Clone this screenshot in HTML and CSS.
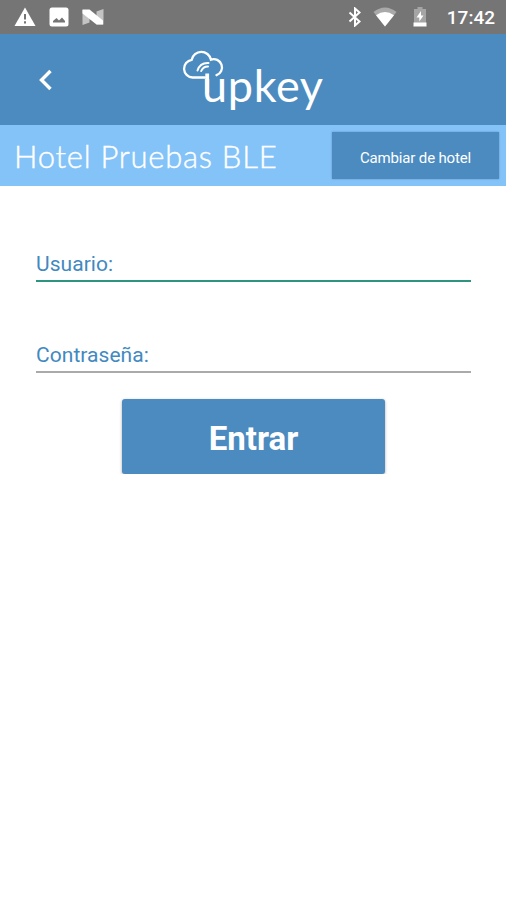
FILE: index.html
```
<!DOCTYPE html>
<html lang="es">
    <head>
        <meta charset="utf-8">
        <title>Upkey</title>
        <link rel="stylesheet" href="styles.css">
    </head>
    <body>
        <div class="status-bar">
            <div class="status-left">
                <svg width="22" height="20" viewBox="0 0 22 20">
                    <path d="M11 0.5 L21.5 19 H0.5 Z" fill="#fff"/>
                    <path d="M11 7 V12.5 M11 14.3 V16.5" stroke="#757575" stroke-width="2"/>
                </svg>
                <svg width="20" height="20" viewBox="0 0 20 20">
                    <rect x="0.5" y="0.5" width="19" height="19" rx="2.5" fill="#fff"/>
                    <path d="M4 15.5 V14 L7.5 11 L10 13.5 L13 10.5 L16 14 V15.5 Z" fill="#757575"/>
                </svg>
                <svg class="nougat" width="22" height="18" viewBox="0 0 22 18">
                    <path d="M0.5 2 H7.5 V14.5 L0.5 17 Z" fill="#c4c4c4"/>
                    <path d="M14.5 3.5 L21.5 1 V16.5 H14.5 Z" fill="#c4c4c4"/>
                    <path d="M0.5 1.5 H7.5 L21 12.5 V16.5 H14.5 L0.5 5.5 Z" fill="#fff"/>
                </svg>
            </div>
            <div class="status-right">
                <svg class="bluetooth" width="14" height="20" viewBox="0 0 14 20">
                    <path d="M1.5 5.5 L11.5 14.5 L7 18.5 V1.5 L11.5 5.5 L1.5 14.5" fill="none" stroke="#fff" stroke-width="2"/>
                </svg>
                <svg class="wifi" width="24" height="20" viewBox="0 0 24 20">
                    <path d="M0.5 5 Q12 -4 23.5 5 L12 19.5 Z" fill="#a9a9a9"/>
                    <path d="M3 8.3 Q12 1.8 21 8.3 L12 19.5 Z" fill="#fff"/>
                </svg>
                <svg class="battery" width="14" height="20" viewBox="0 0 14 20">
                    <path d="M4.5 0 H9.5 V2 H13 V16 H1 V2 H4.5 Z" fill="#a5a5a5"/>
                    <path d="M0.5 15.5 H13.5 V19.5 H0.5 Z" fill="#fff"/>
                    <path d="M8 4 L3.5 10.5 H6.3 V14.5 L10.5 8.5 H8 Z" fill="#fff"/>
                </svg>
                <span class="clock">17:42</span>
            </div>
        </div>

        <header class="header">
            <svg class="back" width="16" height="22" viewBox="0 0 16 22">
                <path d="M13.5 2 L4.5 11 L13.5 20" fill="none" stroke="#fff" stroke-width="3.4"/>
            </svg>
            <svg class="logo" width="150" height="70" viewBox="0 0 150 70">
                <!-- cloud -->
                <g fill="none" stroke="#fff" stroke-width="2.3" stroke-linecap="round">
                    <path d="M25 29.5 H12.5 A8.9 8.9 0 0 1 11.7 11.8 A9.8 9.8 0 0 1 30.9 11.6 A8.2 8.2 0 0 1 36.5 27.2"/>
                    <path d="M17.5 22.5 Q20 14.5 28.5 15 M21.2 23 Q23 18.5 28 18.5" stroke-width="2"/>
                </g>
                <path class="stem" d="M27.2 25.5 V45"/>
                <text class="logo-text" x="22" y="54" textLength="121">upkey</text>
            </svg>
        </header>

        <div class="hotel-bar">
            <h1 class="hotel-name">Hotel Pruebas BLE</h1>
            <button class="change-btn">Cambiar de hotel</button>
        </div>

        <form class="login">
            <label class="field active">Usuario:</label>
            <label class="field">Contraseña:</label>
            <button class="enter-btn" type="button">Entrar</button>
        </form>
    </body>
</html>
```

FILE: styles.css
```
* {
    box-sizing: border-box;
}

body {
    margin: 0;
    background-color: #fff;
    font-family: Roboto, sans-serif;
}

svg {
    display: block;
    flex: none;
}

button {
    border: none;
    padding: 0;
    color: #fff;
    background-color: #4b8bbf;
    font-family: inherit;
}

.status-bar {
    display: flex;
    justify-content: space-between;
    height: 34px;
    padding: 0 11px 0 14px;
    background-color: #757575;
}

.status-left,
.status-right {
    display: flex;
    align-items: center;
}

.status-left {
    gap: 13px;
}

.bluetooth {
    margin-right: 11px;
}

.wifi {
    margin-right: 16px;
}

.battery {
    margin-right: 20px;
}

.clock {
    color: #fff;
    font-size: 19px;
    font-weight: 500;
    line-height: 34px;
    padding-top: 2px;
}

.header {
    display: flex;
    align-items: center;
    height: 91px;
    padding-left: 37px;
    background-color: #4b8bbf;
}

.logo {
    margin-left: 127px;
    margin-top: 6px;
}

.logo-text {
    fill: #fff;
    font-family: Lato, sans-serif;
    font-size: 45px;
}

.stem {
    stroke: #fff;
    stroke-width: 3.8;
}

.hotel-bar {
    display: flex;
    align-items: center;
    justify-content: space-between;
    height: 61px;
    padding: 0 7px 0 14px;
    background-color: #84c3f8;
}

.hotel-name {
    margin: 0;
    color: #fff;
    font-family: Lato, sans-serif;
    font-size: 31px;
    font-weight: 300;
    letter-spacing: 0.75px;
    white-space: nowrap;
    -webkit-text-stroke: 0.4px #fff;
}

.change-btn {
    width: 167px;
    height: 47px;
    font-size: 15px;
    letter-spacing: -0.15px;
    padding-top: 4px;
    box-shadow: 0 0 2px rgba(0, 0, 0, 0.25);
}

.login {
    display: flex;
    flex-direction: column;
    padding: 55px 35px 0 36px;
}

.field {
    height: 41px;
    margin-bottom: 50px;
    color: #4289c0;
    font-size: 21px;
    line-height: 46px;
    letter-spacing: 0.05px;
    border-bottom: 2px solid #aaa;
}

.field.active {
    border-bottom-color: #2d947f;
}

.enter-btn {
    align-self: center;
    width: 263px;
    height: 75px;
    margin-top: -24px;
    border-radius: 3px;
    font-size: 33px;
    font-weight: 700;
    padding-top: 3px;
    box-shadow: 0 1px 3px rgba(0, 0, 0, 0.35);
}
```
